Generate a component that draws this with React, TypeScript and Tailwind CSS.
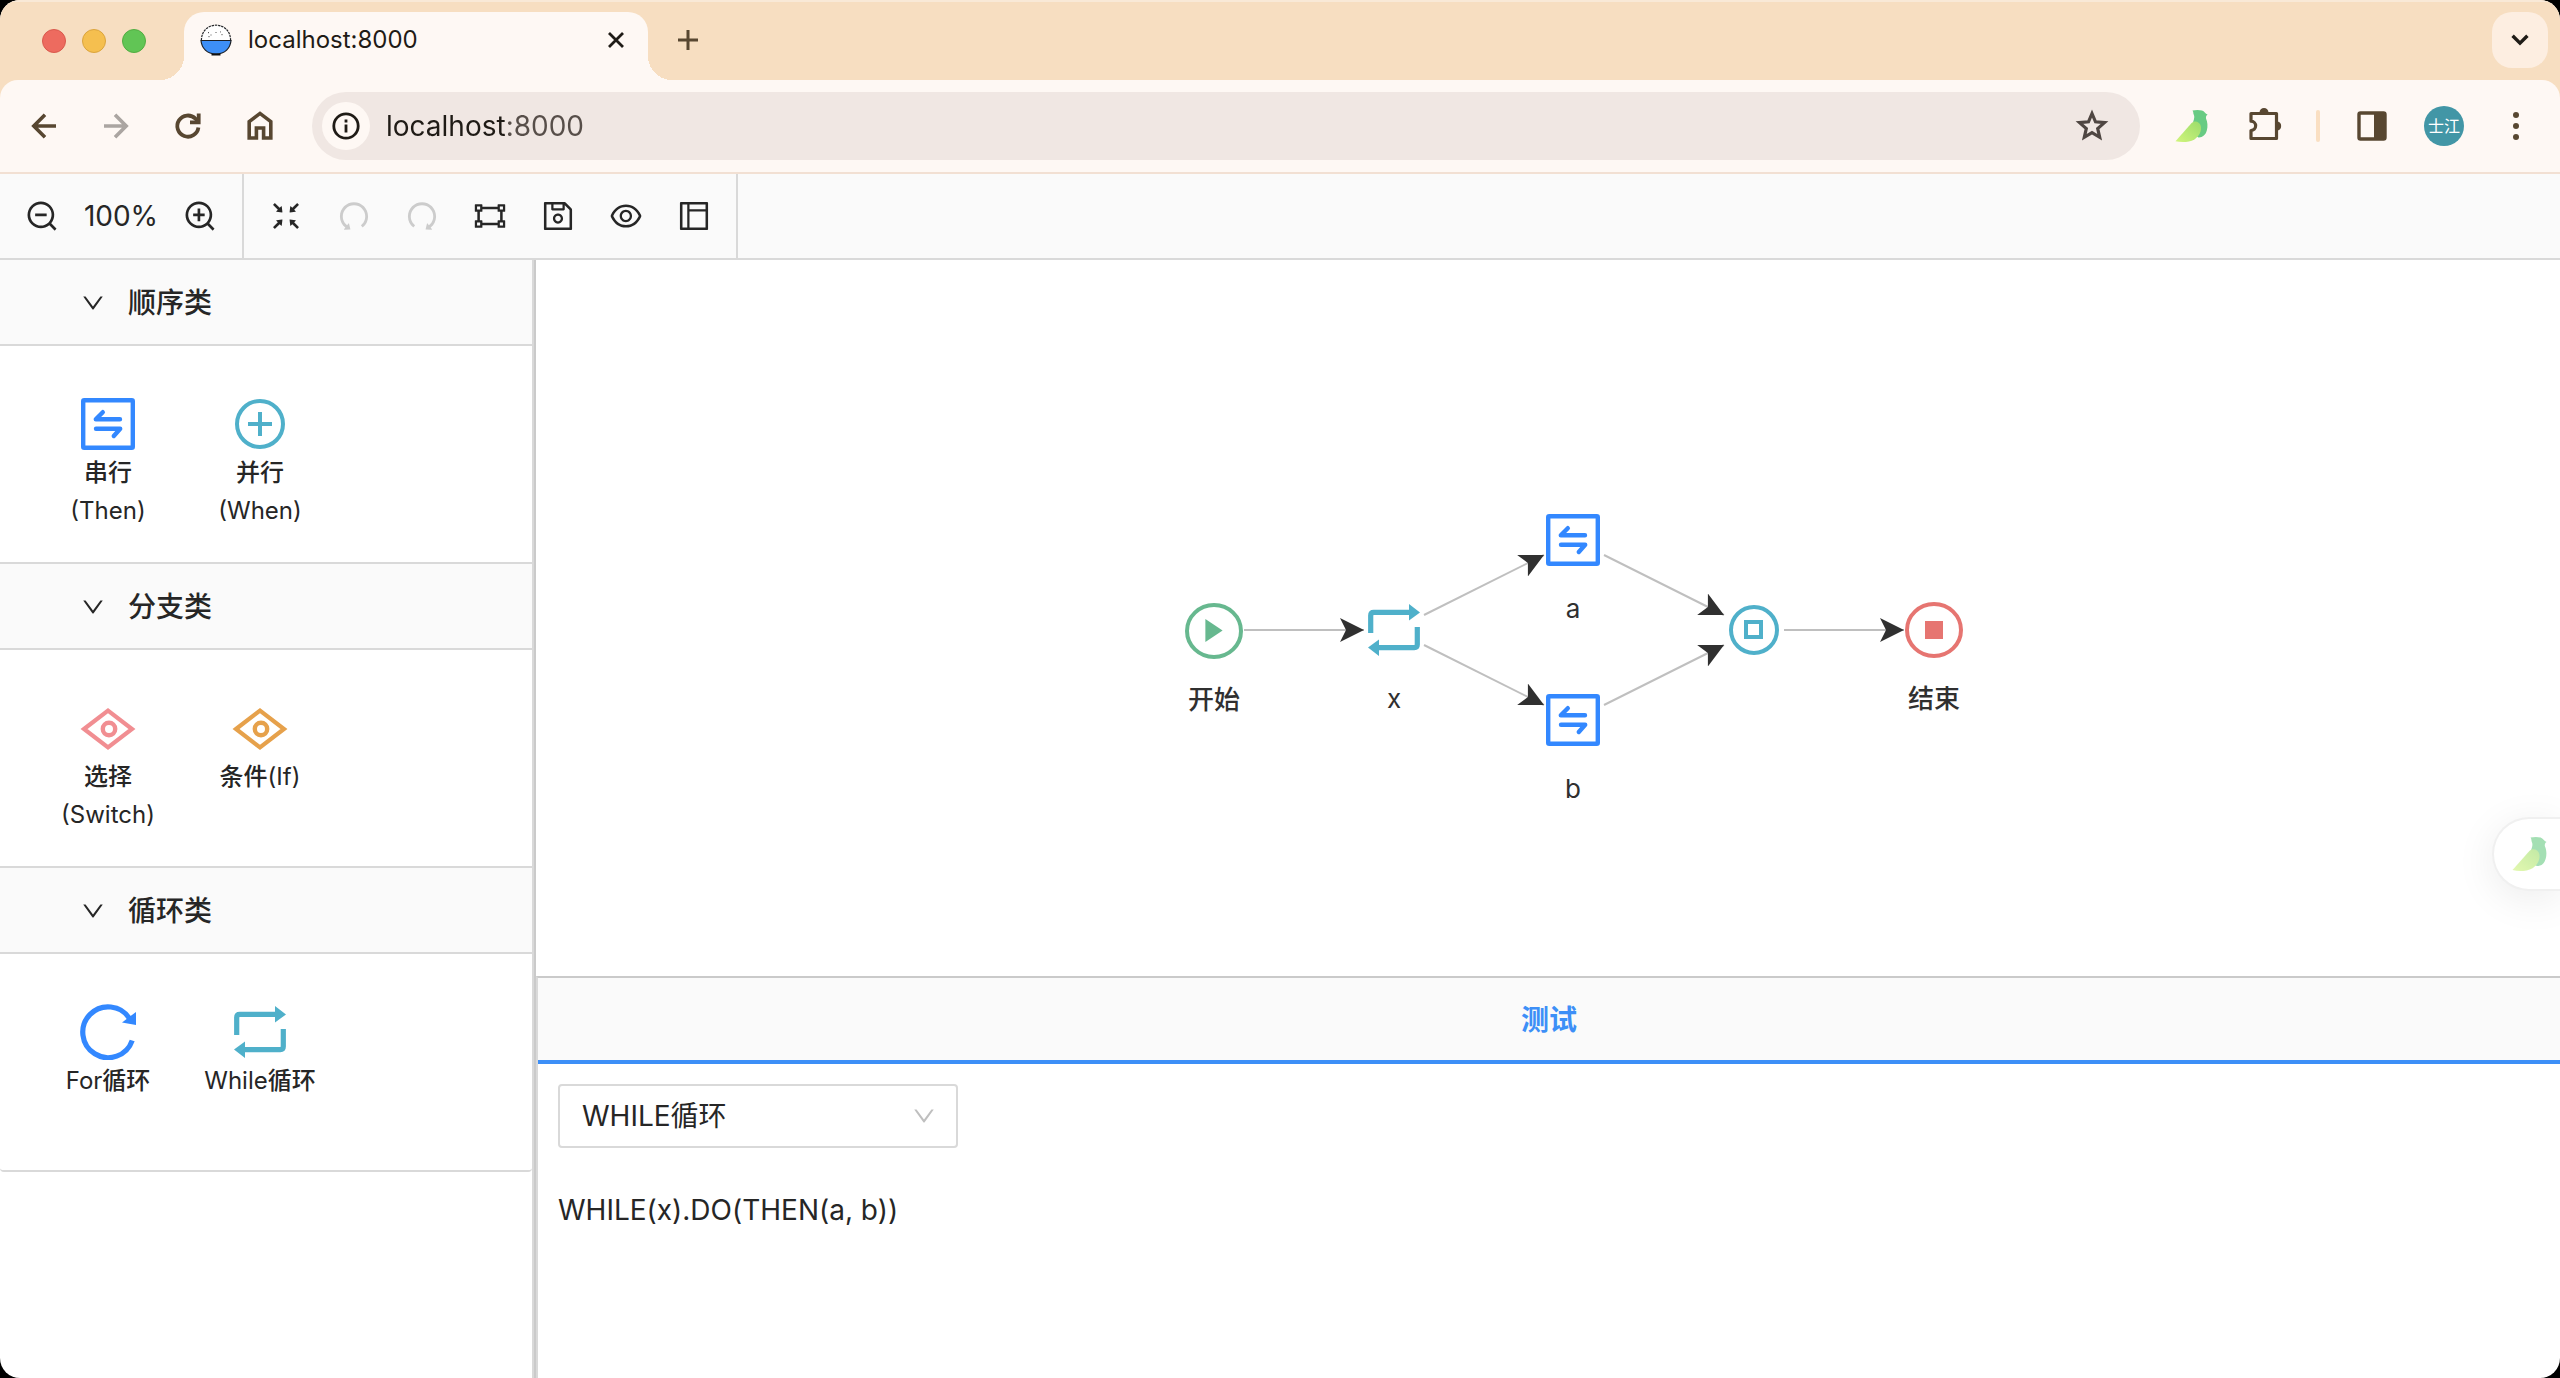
import React, { useState } from "react";
import {
  AiOutlineZoomOut,
  AiOutlineZoomIn,
  AiOutlineFullscreenExit,
  AiOutlineUndo,
  AiOutlineRedo,
  AiOutlineGateway,
  AiOutlineSave,
  AiOutlineEye,
  AiOutlineLayout,
  AiOutlineDown,
} from "react-icons/ai";

type IconProps = { className?: string };

/* ---------- Browser icons ---------- */

function BackIcon() {
  return (
    <svg viewBox="0 0 36 36" className="size-9" fill="none" stroke="currentColor" strokeWidth="3.6">
      <path d="M30 18H8M19 6.8L7.8 18L19 29.2" />
    </svg>
  );
}

function ForwardIcon() {
  return (
    <svg viewBox="0 0 36 36" className="size-9" fill="none" stroke="currentColor" strokeWidth="3.6">
      <path d="M6 18H28M17 6.8L28.2 18L17 29.2" />
    </svg>
  );
}

function ReloadIcon() {
  return (
    <svg viewBox="0 0 36 36" className="size-9" fill="none" stroke="currentColor" strokeWidth="3.8">
      <path d="M28.4 19.5A10.6 10.6 0 1 1 25.4 10.6L28.5 13.7" />
      <path d="M28.7 5.5V14.4H20" />
    </svg>
  );
}

function HomeIcon() {
  return (
    <svg viewBox="0 0 36 36" className="size-9" fill="none" stroke="currentColor" strokeWidth="3.6">
      <path d="M7.2 30V13.6L18 5.4L28.8 13.6V30H21.6V20H14.4V30Z" />
    </svg>
  );
}

function InfoIcon() {
  return (
    <svg viewBox="0 0 28 28" className="size-7" fill="none" stroke="currentColor" strokeWidth="2.8">
      <circle cx="14" cy="14" r="12.2" />
      <path d="M14 12.5V20.5M14 7.6V10.4" />
    </svg>
  );
}

function StarIcon() {
  return (
    <svg viewBox="0 0 36 36" className="size-9" fill="none" stroke="currentColor" strokeWidth="3.2">
      <path d="M18 5.5L21.5 13.8L30.5 14.6L23.7 20.5L25.7 29.3L18 24.7L10.3 29.3L12.3 20.5L5.5 14.6L14.5 13.8Z" />
    </svg>
  );
}

function PuzzleIcon() {
  return (
    <svg viewBox="0 0 36 36" className="size-9" fill="none">
      <path
        d="M6 5.5H30.5V30.5H5V22.5A4.6 4.6 0 0 0 5 13.2V5.5Z"
        stroke="currentColor"
        strokeWidth="3.2"
        strokeLinejoin="round"
      />
      <path d="M13.5 4.5A4.5 4.5 0 0 1 22.5 4.5ZM31.5 13.5A4.6 4.6 0 0 1 31.5 22.5Z" fill="currentColor" />
    </svg>
  );
}

function SidePanelIcon() {
  return (
    <svg viewBox="0 0 36 36" className="size-9" fill="none">
      <rect x="5" y="5" width="26" height="26" rx="1.5" stroke="currentColor" strokeWidth="3.4" />
      <rect x="20" y="5" width="11" height="26" fill="currentColor" />
    </svg>
  );
}

function MoreIcon() {
  return (
    <svg viewBox="0 0 36 36" className="size-9" fill="currentColor">
      <circle cx="18" cy="7" r="3" />
      <circle cx="18" cy="18" r="3" />
      <circle cx="18" cy="29" r="3" />
    </svg>
  );
}

function BirdIcon({ className }: IconProps) {
  return (
    <svg viewBox="0 0 34 34" className={className}>
      <defs>
        <linearGradient id="birdWing" x1="0" y1="1" x2="1" y2="0">
          <stop offset="0" stopColor="#d2f57c" />
          <stop offset="1" stopColor="#9bdc6b" />
        </linearGradient>
      </defs>
      <path
        d="M17.5 1.5C20 .8 24 .6 27 1.4C29.5 2.2 30.2 4.6 32.6 5.6C31.4 6.4 30.8 7.6 31 9.4C32.6 12.6 33 17.5 31.8 21.5C30.6 26 27.5 28.6 23.5 28.4C20.5 27.6 17.6 18 18.2 12.8C19.4 9.4 19.6 7.4 18.8 5.8C18 4.6 18.8 3 17.5 1.5Z"
        fill="#68cb83"
      />
      <path d="M.5 32.2L16.4 14.2C19.6 11.2 24.6 12.6 25.8 17C26.8 22 24.4 27 19.4 30.4C14 33.4 6.4 33.6 .5 32.2Z" fill="url(#birdWing)" />
    </svg>
  );
}

function BowlIcon() {
  return (
    <svg viewBox="0 0 32 32" className="size-8">
      <path d="M1.4 16.5C1.4 7 8 1.2 16 1.2S30.6 7 30.6 16.5Z" fill="#fff" stroke="#26282b" strokeWidth="1.2" strokeDasharray="2.4 .8" />
      <path d="M1 16.5H31C30.4 24 25 30 16 30S1.6 24 1 16.5Z" fill="#3d8ff7" stroke="#1c1f24" strokeWidth="1.2" />
      <path d="M11.5 29.5H20.5V31.5H11.5Z" fill="#111" />
      <path d="M8.5 8V9.2M9 12V13.2M11 10.5V11.5M16 8V9M22 10V11.2M20.5 7.5V8.4" stroke="#555" strokeWidth="1" />
    </svg>
  );
}

/* ---------- Flow icons ---------- */

function ThenIcon() {
  return (
    <svg viewBox="0 0 54 52" className="h-13 w-[54px]" fill="none" stroke="#3388ff" strokeWidth="4.4" strokeLinecap="round" strokeLinejoin="round">
      <rect x="2.2" y="2.2" width="49.6" height="47.6" rx="1" />
      <path d="M39 21.2H14.8L21.8 14.2M15 30.8H39.2L32.8 38" />
    </svg>
  );
}

function WhenIcon() {
  return (
    <svg viewBox="0 0 50 50" className="size-[50px]" fill="none" stroke="#4fb0ca" strokeWidth="4">
      <circle cx="25" cy="25" r="23" />
      <path d="M13 25H37M25 13V37" />
    </svg>
  );
}

function DiamondEyeIcon({ className }: IconProps) {
  return (
    <svg viewBox="0 0 56 56" className={className} fill="none" stroke="currentColor">
      <path d="M4 29L28 10.6L52 29L28 47.4Z" strokeWidth="4.2" />
      <circle cx="29" cy="29" r="6.2" strokeWidth="4.4" />
    </svg>
  );
}

function ForIcon() {
  return (
    <svg viewBox="0 0 56 56" className="size-14" fill="none">
      <path d="M52.2 36.5A25.4 25.4 0 1 1 49.6 14.6" stroke="#3388ff" strokeWidth="5.2" />
      <path d="M56 8V21L42 18.4Z" fill="#3388ff" />
    </svg>
  );
}

function WhileIcon() {
  return (
    <svg viewBox="0 0 52 52" className="size-13" fill="none">
      <path d="M2.7 29V11.4Q2.7 8.4 5.7 8.4H42M49.3 23V40.6Q49.3 43.6 46.3 43.6H10" stroke="#4fb0ca" strokeWidth="5.2" />
      <path d="M41 0L52 8.4L41 16.6ZM11 35.4L0 43.6L11 52Z" fill="#4fb0ca" />
    </svg>
  );
}

function StartIcon() {
  return (
    <svg viewBox="0 0 58 56" className="h-14 w-[58px]">
      <ellipse cx="29" cy="28" rx="27" ry="26" fill="none" stroke="#67b88f" strokeWidth="4" />
      <path d="M20.4 16L37.6 27.5L20.4 39Z" fill="#67b88f" />
    </svg>
  );
}

function EndIcon() {
  return (
    <svg viewBox="0 0 58 56" className="h-14 w-[58px]">
      <ellipse cx="29" cy="28" rx="27" ry="26" fill="none" stroke="#e67571" strokeWidth="4" />
      <rect x="20" y="19" width="18" height="18" fill="#e67571" />
    </svg>
  );
}

function JoinIcon() {
  return (
    <svg viewBox="0 0 50 50" className="size-[50px]" fill="none" stroke="#4fb0ca" strokeWidth="4">
      <circle cx="25" cy="25" r="23" />
      <rect x="17" y="17" width="15" height="15" />
    </svg>
  );
}

/* ---------- Browser chrome ---------- */

function TabStrip() {
  return (
    <div className="flex h-20 items-stretch bg-[#f7dec1] shadow-[inset_0_2px_0_#f9e9d7]">
      <div className="flex w-46 items-center gap-4 pt-0.5 pl-[42px]">
        <button aria-label="Close window" className="size-6 rounded-full border border-[#d9594d] bg-[#ed6b5f]" />
        <button aria-label="Minimize window" className="size-6 rounded-full border border-[#dba43d] bg-[#f5bf4f]" />
        <button aria-label="Zoom window" className="size-6 rounded-full border border-[#52ad42] bg-[#61c555]" />
      </div>
      <div className="relative mt-3 flex w-[464px] items-center rounded-t-[20px] bg-[#fef8f4] px-4 pb-3">
        <span className="absolute bottom-0 -left-6 size-6 bg-[radial-gradient(circle_at_0_0,transparent_24px,#fef8f4_24px)]" />
        <span className="absolute -right-6 bottom-0 size-6 bg-[radial-gradient(circle_at_100%_0,transparent_24px,#fef8f4_24px)]" />
        <BowlIcon />
        <span className="ml-4 flex-1 text-2xl text-[#1f1b16]">localhost:8000</span>
        <button aria-label="Close tab" className="grid size-8 place-items-center text-[#1f1b16]">
          <svg viewBox="0 0 18 18" className="size-[18px]" stroke="currentColor" strokeWidth="2.8">
            <path d="M2 2L16 16M16 2L2 16" />
          </svg>
        </button>
      </div>
      <button aria-label="New tab" className="ml-6 grid h-20 w-8 place-items-center text-[#584731]">
        <svg viewBox="0 0 20 20" className="size-5" stroke="currentColor" strokeWidth="3">
          <path d="M10 0V20M0 10H20" />
        </svg>
      </button>
      <div className="flex-1" />
      <button aria-label="Search tabs" className="my-3 mr-3 grid size-14 place-items-center rounded-[20px] bg-[#fdeee1] text-[#1f1b16]">
        <svg viewBox="0 0 18 12" className="h-3 w-[18px]" fill="none" stroke="currentColor" strokeWidth="3.4">
          <path d="M1.6 1.8L9 9.2L16.4 1.8" />
        </svg>
      </button>
    </div>
  );
}

function AddressBar() {
  const [url, setUrl] = useState("localhost:8000");
  return (
    <div className="bg-[#f7dec1]">
      <div className="flex h-[94px] items-center rounded-t-[18px] border-b-2 border-[#f2e0d3] bg-[#fef8f4] pr-[26px] pl-[26px] text-[#584731]">
        <div className="flex gap-9">
          <button aria-label="Back"><BackIcon /></button>
          <button aria-label="Forward" className="text-[#aba5a1]"><ForwardIcon /></button>
          <button aria-label="Reload"><ReloadIcon /></button>
          <button aria-label="Home"><HomeIcon /></button>
        </div>
        <div className="ml-[34px] flex h-[68px] flex-1 items-center rounded-full bg-[#f0e7e3] pr-[30px] pl-2.5">
          <button aria-label="Site information" className="grid size-12 place-items-center rounded-full bg-[#fef8f4] text-[#1f1b16]">
            <InfoIcon />
          </button>
          <input
            aria-label="Address"
            value={url}
            onChange={(e) => setUrl(e.target.value)}
            className="ml-4 h-12 flex-1 bg-[linear-gradient(90deg,#1f1b16_119px,#574e49_119px)] bg-clip-text text-[28px] text-transparent outline-none"
          />
          <button aria-label="Bookmark this page" className="text-[#4f4642]"><StarIcon /></button>
        </div>
        <div className="ml-[34px] flex items-center gap-9">
          <button aria-label="Bird extension"><BirdIcon className="mx-px size-[34px]" /></button>
          <button aria-label="Extensions"><PuzzleIcon /></button>
          <span className="-mx-0.5 h-8 w-1 rounded-full bg-[#fadfc2]" />
          <button aria-label="Side panel"><SidePanelIcon /></button>
          <button aria-label="Profile" className="-mx-0.5 grid size-10 place-items-center rounded-full bg-[#4296a6] text-base text-white">
            士江
          </button>
          <button aria-label="Menu"><MoreIcon /></button>
        </div>
      </div>
    </div>
  );
}

/* ---------- Editor ---------- */

const tools = [
  { label: "适应画布", Icon: AiOutlineFullscreenExit, disabled: false },
  { label: "撤销", Icon: AiOutlineUndo, disabled: true },
  { label: "重做", Icon: AiOutlineRedo, disabled: true },
  { label: "框选", Icon: AiOutlineGateway, disabled: false },
  { label: "保存", Icon: AiOutlineSave, disabled: false },
  { label: "预览", Icon: AiOutlineEye, disabled: false },
  { label: "布局", Icon: AiOutlineLayout, disabled: false },
];

function EditorToolbar() {
  return (
    <div className="flex h-[86px] border-b-2 border-[#d9d9d9] bg-[#fafafa]">
      <div className="flex items-center justify-between border-r-2 border-[#d9d9d9] px-6">
        <button aria-label="缩小"><AiOutlineZoomOut className="size-9" /></button>
        <span className="w-[122px] text-center text-[28px]">100%</span>
        <button aria-label="放大"><AiOutlineZoomIn className="size-9" /></button>
      </div>
      <div className="flex items-center gap-8 border-r-2 border-[#d9d9d9] px-6">
        {tools.map(({ label, Icon, disabled }) => (
          <button key={label} aria-label={label} disabled={disabled} className="disabled:text-[#cccccc]">
            <Icon className="size-9" />
          </button>
        ))}
      </div>
    </div>
  );
}

const groups = [
  {
    title: "顺序类",
    items: [
      { icon: <ThenIcon />, lines: ["串行", "(Then)"] },
      { icon: <WhenIcon />, lines: ["并行", "(When)"] },
    ],
  },
  {
    title: "分支类",
    items: [
      { icon: <DiamondEyeIcon className="size-14 text-[#f18e92]" />, lines: ["选择", "(Switch)"] },
      { icon: <DiamondEyeIcon className="size-14 text-[#e6a14b]" />, lines: ["条件(If)"] },
    ],
  },
  {
    title: "循环类",
    items: [
      { icon: <ForIcon />, lines: ["For循环"] },
      { icon: <WhileIcon />, lines: ["While循环"] },
    ],
  },
];

/* Chinese runs are set one weight heavier than the Latin text around them. */
function Mixed({ text }: { text: string }) {
  return (
    <>
      {text.split(/([\u4e00-\u9fff]+)/).map((part, i) =>
        i % 2 ? (
          <span key={i} className="font-medium">{part}</span>
        ) : (
          part
        ),
      )}
    </>
  );
}

function Palette() {
  return (
    <aside className="w-[534px] shrink-0 border-r-2 border-[#d9d9d9]">
      {groups.map((group) => (
        <section key={group.title} className="border-b-2 border-[#d9d9d9] last:rounded-b">
          <button className="flex h-[86px] w-full items-center gap-[22px] border-b-2 border-[#d9d9d9] bg-[#fafafa] pt-0.5 pl-20 text-[28px] font-medium">
            <AiOutlineDown className="size-[26px]" />
            {group.title}
          </button>
          <div className="flex min-h-[216px] items-start pt-12 pl-8">
            {group.items.map((item) => (
              <div key={item.lines[0]} className="flex w-[152px] cursor-grab flex-col items-center text-2xl leading-[38px]">
                <div className="grid h-15 place-items-center">{item.icon}</div>
                {item.lines.map((line) => (
                  <span key={line}><Mixed text={line} /></span>
                ))}
              </div>
            ))}
          </div>
        </section>
      ))}
    </aside>
  );
}

/* Node centres and edge ends are in canvas coordinates. */
const nodes = [
  { id: "start", x: 678, y: 371, label: "开始", icon: <StartIcon /> },
  { id: "x", x: 858, y: 370, label: "x", icon: <WhileIcon /> },
  { id: "a", x: 1037, y: 280, label: "a", icon: <ThenIcon /> },
  { id: "b", x: 1037, y: 460, label: "b", icon: <ThenIcon /> },
  { id: "join", x: 1218, y: 370, label: "", icon: <JoinIcon /> },
  { id: "end", x: 1398, y: 370, label: "结束", icon: <EndIcon /> },
];

const edges = [
  [708, 370, 828, 370],
  [888, 355, 1008, 295],
  [888, 385, 1008, 445],
  [1068, 295, 1188, 355],
  [1068, 445, 1188, 385],
  [1248, 370, 1368, 370],
];

function Canvas() {
  return (
    <div className="relative h-[716px] overflow-hidden">
      <svg className="absolute inset-0 size-full">
        <defs>
          <marker id="arrow" viewBox="0 0 24 24" refX="24" refY="12" markerWidth="24" markerHeight="24" markerUnits="userSpaceOnUse" orient="auto">
            <path d="M24 12L0 24L6 12L0 0Z" fill="#303030" />
          </marker>
        </defs>
        {edges.map(([x1, y1, x2, y2]) => (
          <line key={`${x1}-${y1}-${y2}`} x1={x1} y1={y1} x2={x2} y2={y2} stroke="#bfbfbf" strokeWidth="2" markerEnd="url(#arrow)" />
        ))}
      </svg>
      {nodes.map((node) => (
        <div
          key={node.id}
          className="absolute flex h-14 w-20 -translate-x-1/2 -translate-y-1/2 flex-col items-center"
          style={{ left: node.x, top: node.y }}
        >
          <div className="grid h-14 shrink-0 place-items-center">{node.icon}</div>
          <span className="mt-[21px] text-[26px] leading-10 text-[#303030]"><Mixed text={node.label} /></span>
        </div>
      ))}
      <button
        aria-label="Open assistant"
        className="absolute top-[557px] right-0 flex h-[74px] w-[68px] items-center rounded-l-full border-2 border-r-0 border-[#f0f0f0] bg-white pl-[18px] shadow-[0_8px_40px_rgba(0,0,0,0.08)]"
      >
        <BirdIcon className="size-9 opacity-60" />
      </button>
    </div>
  );
}

function TestPanel() {
  return (
    <section className="flex-1 border-t-2 border-l-2 border-t-[#cacaca] border-l-[#d9d9d9]">
      <button className="h-[86px] w-full border-b-4 border-[#3d8ff7] bg-[#fafafa] pt-0.5 text-[28px] font-bold text-[#3d8ff7]">
        测试
      </button>
      <div className="px-5 py-5">
        <div className="relative w-[400px]">
          <select
            aria-label="测试用例"
            className="h-16 w-full appearance-none rounded border-2 border-[#d9d9d9] bg-white pl-[22px] text-[28px] outline-none"
          >
            <option>WHILE循环</option>
          </select>
          <AiOutlineDown className="pointer-events-none absolute top-[19px] right-[21px] size-[26px] text-[#bfbfbf]" />
        </div>
        <p className="mt-10 text-[28px] leading-11">WHILE(x).DO(THEN(a, b))</p>
      </div>
    </section>
  );
}

export default function App() {
  return (
    <div className="min-h-screen bg-black">
      <div className="flex min-h-screen flex-col overflow-hidden rounded-[20px] bg-white font-[Inter,'Noto_Sans_CJK_SC',sans-serif] text-[#262626]">
        <TabStrip />
        <AddressBar />
        <EditorToolbar />
        <div className="flex flex-1">
          <Palette />
          <main className="flex min-w-0 flex-1 flex-col border-l-2 border-[#cacaca]">
            <Canvas />
            <TestPanel />
          </main>
        </div>
      </div>
    </div>
  );
}
